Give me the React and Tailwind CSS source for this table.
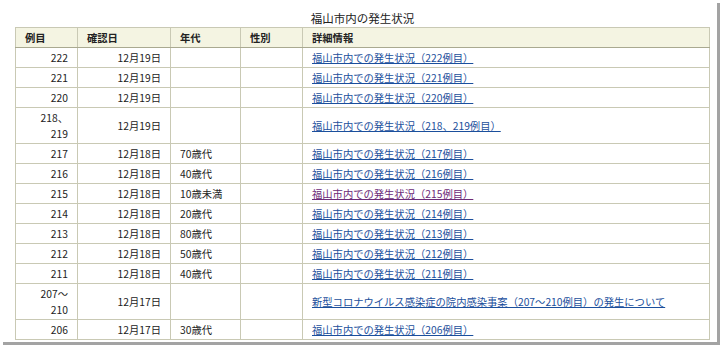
import React from 'react';

const rows = [
  { no: '222', date: '12月19日', age: '', text: '福山市内での発生状況（222例目）' },
  { no: '221', date: '12月19日', age: '', text: '福山市内での発生状況（221例目）' },
  { no: '220', date: '12月19日', age: '', text: '福山市内での発生状況（220例目）' },
  { no: ['218、', '219'], date: '12月19日', age: '', text: '福山市内での発生状況（218、219例目）' },
  { no: '217', date: '12月18日', age: '70歳代', text: '福山市内での発生状況（217例目）' },
  { no: '216', date: '12月18日', age: '40歳代', text: '福山市内での発生状況（216例目）' },
  { no: '215', date: '12月18日', age: '10歳未満', text: '福山市内での発生状況（215例目）', visited: true },
  { no: '214', date: '12月18日', age: '20歳代', text: '福山市内での発生状況（214例目）' },
  { no: '213', date: '12月18日', age: '80歳代', text: '福山市内での発生状況（213例目）' },
  { no: '212', date: '12月18日', age: '50歳代', text: '福山市内での発生状況（212例目）' },
  { no: '211', date: '12月18日', age: '40歳代', text: '福山市内での発生状況（211例目）' },
  { no: ['207～', '210'], date: '12月17日', age: '', text: '新型コロナウイルス感染症の院内感染事案（207～210例目）の発生について' },
  { no: '206', date: '12月17日', age: '30歳代', text: '福山市内での発生状況（206例目）' },
];

const cell = 'border border-[#c9c9b4] px-[9px] pt-[2px] pb-[1px] align-middle';

export default function App() {
  return (
    <div className="w-[720px] h-[345px] bg-white overflow-hidden">
      <div
        className="w-[717px] h-[342px] bg-white shadow-[3px_3px_0_#a3a3a3] pt-[10px] text-[#222] text-[10.3px] leading-[16px]"
        style={{ fontFamily: '"Noto Sans CJK JP", "Noto Sans", sans-serif' }}
      >
        <table className="ml-[15px] w-[695px] border-collapse border border-[#a3a38a] table-fixed">
          <caption className="text-[11.5px] leading-[17px] text-[#222] text-center">福山市内の発生状況</caption>
          <colgroup>
            <col className="w-[62px]" />
            <col className="w-[93px]" />
            <col className="w-[70px]" />
            <col className="w-[62px]" />
            <col />
          </colgroup>
          <thead>
            <tr className="bg-[#f4f4e2]">
              {['例目', '確認日', '年代', '性別', '詳細情報'].map((h) => (
                <th key={h} className={`${cell} text-left font-bold border-b-[#a9a990] py-[2px]`}>{h}</th>
              ))}
            </tr>
          </thead>
          <tbody>
            {rows.map((r, i) => (
              <tr key={i}>
                <td className={`${cell} text-right`}>
                  {Array.isArray(r.no) ? (
                    <>
                      {r.no[0]}
                      <br />
                      {r.no[1]}
                    </>
                  ) : (
                    r.no
                  )}
                </td>
                <td className={`${cell} text-right`}>{r.date}</td>
                <td className={cell}>{r.age}</td>
                <td className={cell}></td>
                <td className={cell}>
                  <a
                    href="#"
                    className={`underline ${r.visited ? 'text-[#6b2a78]' : 'text-[#1b4f9c]'}`}
                  >
                    {r.text}
                  </a>
                </td>
              </tr>
            ))}
          </tbody>
        </table>
      </div>
    </div>
  );
}
